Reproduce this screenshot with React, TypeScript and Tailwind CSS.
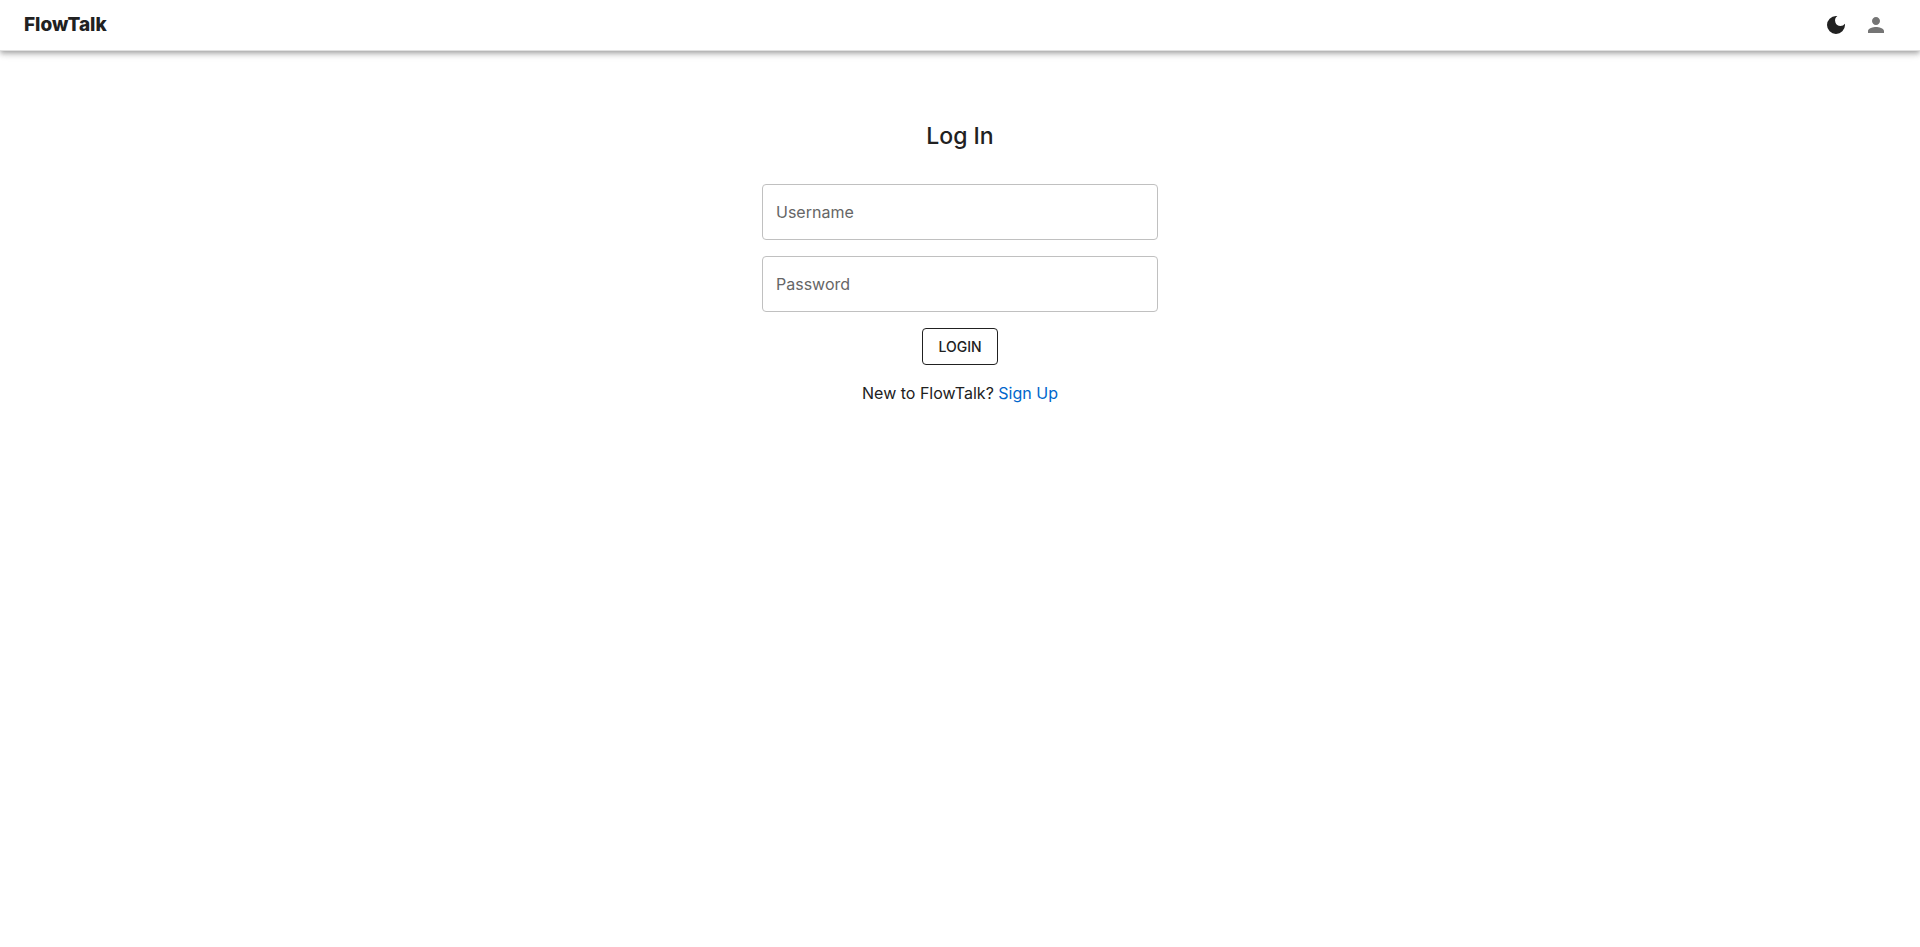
import { useState } from "react";
import { MdPerson } from "react-icons/md";

function Field({ id, label, type }: { id: string; label: string; type: string }) {
  return (
    <div className="relative w-full">
      <input
        id={id}
        type={type}
        placeholder=" "
        className="peer block h-14 w-full rounded border border-[#c0c0c0] px-[13px] text-base text-[#212121] outline-none focus:border-[#212121]"
      />
      <label
        htmlFor={id}
        className="pointer-events-none absolute top-4 left-[14px] bg-white text-base leading-6 text-[#666666] peer-focus:-top-3 peer-focus:text-xs peer-[:not(:placeholder-shown)]:-top-3 peer-[:not(:placeholder-shown)]:text-xs"
      >
        {label}
      </label>
    </div>
  );
}

export default function App() {
  const [dark, setDark] = useState(false);
  return (
    <div className="min-h-screen bg-white font-['Inter',sans-serif] text-[#212121]">
      <header className="flex items-center justify-between border-b border-[#e0e0e0] bg-white px-6 py-[5px] shadow-[0px_2px_4px_-1px_rgba(0,0,0,0.2),0px_4px_5px_0px_rgba(0,0,0,0.14),0px_1px_10px_0px_rgba(0,0,0,0.12)]">
        <a href="#" className="text-[19px] leading-8 font-extrabold">FlowTalk</a>
        <div className="flex">
          <button type="button" aria-label="Toggle theme" aria-pressed={dark} onClick={() => setDark(!dark)} className="p-2">
            <svg viewBox="0 0 24 24" className="size-6" fill="currentColor"><path d="M12 3a9 9 0 1 0 9 9c0-.46-.04-.92-.1-1.36a5.389 5.389 0 0 1-4.4 2.26 5.403 5.403 0 0 1-3.14-9.8c-.44-.06-.9-.1-1.36-.1z" /></svg>
          </button>
          <button type="button" aria-label="Account" className="p-2 text-[#757575]">
            <MdPerson className="size-6" />
          </button>
        </div>
      </header>
      <main className="mx-auto flex max-w-[396px] flex-col items-center gap-8 pt-[69px]">
        <h1 className="text-[23px] leading-8 font-medium">Log In</h1>
        <div className="flex w-full flex-col items-center gap-4">
          <form className="flex w-full flex-col items-center gap-4" onSubmit={(e) => e.preventDefault()}>
            <Field id="username" label="Username" type="text" />
            <Field id="password" label="Password" type="password" />
            <button type="submit" className="rounded border border-[#212121] px-[15px] py-[5px] text-sm leading-[25px] font-medium uppercase">Login</button>
          </form>
          <p className="text-base">
            New to FlowTalk? <a href="#" className="text-[#0066cc]">Sign Up</a>
          </p>
        </div>
      </main>
    </div>
  );
}
